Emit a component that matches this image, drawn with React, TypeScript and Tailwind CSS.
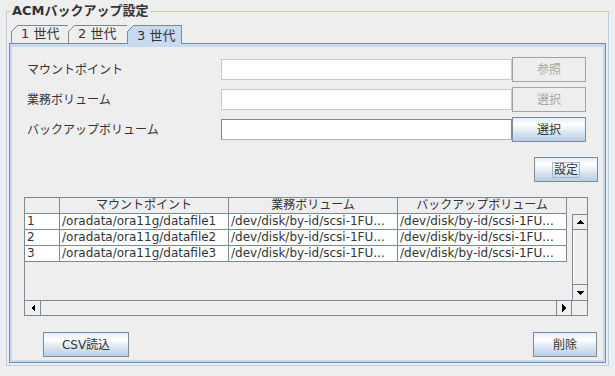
import React from 'react';

const rows = [
  ['1', '/oradata/ora11g/datafile1', '/dev/disk/by-id/scsi-1FU...', '/dev/disk/by-id/scsi-1FU...'],
  ['2', '/oradata/ora11g/datafile2', '/dev/disk/by-id/scsi-1FU...', '/dev/disk/by-id/scsi-1FU...'],
  ['3', '/oradata/ora11g/datafile3', '/dev/disk/by-id/scsi-1FU...', '/dev/disk/by-id/scsi-1FU...'],
];

const colWidths = ['w-[35px]', 'w-[169px]', 'w-[169px]', 'w-[169px]'];

const tabs = [
  { label: '1 世代', w: 57, selected: false },
  { label: '2 世代', w: 59, selected: false },
  { label: '3 世代', w: 55, selected: true },
];

function Tab({ label, w, selected, last }: { label: string; w: number; selected: boolean; last: boolean }) {
  const h = selected ? 19 : 18;
  const outline = `M0.5 ${h} V6.5 L6.5 0.5 H${w - 0.5}` + (last ? ` V${h}` : '');
  return (
    <div
      className={`relative flex items-center whitespace-pre pl-[10px] text-[13px] text-[#333333] ${
        selected ? 'z-10 h-[19px] items-start pt-[1px]' : 'h-[18px]'
      }`}
      style={{ width: w }}
    >
      <svg className="absolute left-0 top-0" width={w + 1} height={h} shapeRendering="crispEdges">
        {selected && <path d={`M0 ${h} V6.5 L6.5 0 H${w} V${h} Z`} fill="#c8daf0" />}
        <path d={outline} fill="none" stroke="#7a8a99" strokeWidth="1" />
      </svg>
      <span className="relative">{label}</span>
    </div>
  );
}

function Button({ label, width, disabled, focused }: { label: string; width: string; disabled?: boolean; focused?: boolean }) {
  if (disabled) {
    return (
      <div className={`flex h-[25px] ${width} shrink-0 items-center justify-center border border-[#a3a3a3] bg-[#eeeeee] text-[12px] text-[#a6a6a6]`}>
        {label}
      </div>
    );
  }
  return (
    <div
      className={`flex h-[25px] ${width} shrink-0 items-center justify-center border border-[#7a8a99] bg-[linear-gradient(to_bottom,#e4edf6_0%,#ffffff_28%,#dbe6f2_62%,#b8cfe5_100%)] text-[12px] text-[#333333]`}
    >
      <span className={focused ? 'border border-[#a3b8cc] px-[1px] leading-[14px]' : ''}>{label}</span>
    </div>
  );
}

function FormRow({ label, disabled, button }: { label: string; disabled: boolean; button: string }) {
  return (
    <div className="flex h-[25px] items-center">
      <div className="w-[194px] pl-[15px] text-[12px] text-[#333333]" style={{ boxSizing: 'content-box' }}>
        {label}
      </div>
      <div
        className={`h-[21px] w-[291px] border bg-white ${
          disabled ? 'border-[#bccbdb]' : 'border-[#7a8a99] border-b-[#a9b6c2]'
        }`}
      />
      <Button label={button} width="w-[74px]" disabled={disabled} />
    </div>
  );
}

function Arrow({ dir }: { dir: 'up' | 'down' | 'left' | 'right' }) {
  const d = {
    up: 'M0 4 L4 0 L8 4 Z',
    down: 'M0 0 L8 0 L4 4 Z',
    left: 'M4 0 L4 8 L0 4 Z',
    right: 'M0 0 L4 4 L0 8 Z',
  }[dir];
  const vertical = dir === 'up' || dir === 'down';
  return (
    <svg width={vertical ? 8 : 4} height={vertical ? 4 : 8} shapeRendering="crispEdges">
      <path d={d} fill="#000000" />
    </svg>
  );
}

export default function App() {
  return (
    <div className="h-[376px] w-[615px] overflow-hidden bg-[#eeeeee] pl-[6px] pt-[11px] font-['DejaVu_Sans','Noto_Sans_CJK_JP',sans-serif]">
      <div className="relative h-[355px] w-[603px] border border-[#b8cfe5] px-[2px] pt-[13px]">
        <span className="absolute left-[4px] top-[-10px] bg-[#eeeeee] px-[1px] text-[13px] font-bold leading-[18px] text-[#333333]">
          ACMバックアップ設定
        </span>

        <div className="ml-[2px] flex h-[18px]">
          {tabs.map((t, i) => (
            <Tab key={t.label} label={t.label} w={t.w} selected={t.selected} last={i === tabs.length - 1} />
          ))}
        </div>

        <div className="h-[320px] w-[597px] border border-[#7a8a99]">
          <div className="flex h-full flex-col border-x-2 border-b-2 border-t-[3px] border-[#c8daf0] bg-[#eeeeee]">
            <div className="mt-[10px] flex flex-col gap-[5px]">
              <FormRow label="マウントポイント" disabled button="参照" />
              <FormRow label="業務ボリューム" disabled button="選択" />
              <FormRow label="バックアップボリューム" disabled={false} button="選択" />
            </div>

            <div className="mr-[5px] mt-[15px] flex justify-end">
              <Button label="設定" width="w-[64px]" focused />
            </div>

            <div className="ml-[12px] mt-[15px] grid h-[119px] w-[564px] grid-cols-[547px_15px] grid-rows-[16px_86px_15px] border border-[#7a8a99] text-[12px] text-[#333333]">
              {/* column header */}
              <div className="flex">
                {['', 'マウントポイント', '業務ボリューム', 'バックアップボリューム'].map((h, i) => (
                  <div
                    key={i}
                    className={`${colWidths[i]} flex h-[16px] items-center justify-center border-b border-r border-[#7a8a99] leading-[15px]`}
                  >
                    {h}
                  </div>
                ))}
              </div>
              <div />

              {/* rows */}
              <div>
                {rows.map((r) => (
                  <div key={r[0]} className="flex">
                    {r.map((c, i) => (
                      <div
                        key={i}
                        className={`${colWidths[i]} h-[16px] overflow-hidden whitespace-nowrap border-b border-r border-[#7a8a99] bg-white pl-[2px] leading-[15px]`}
                      >
                        {c}
                      </div>
                    ))}
                  </div>
                ))}
              </div>

              {/* vertical scrollbar */}
              <div className="flex flex-col border-l border-[#7a8a99]">
                <div className="flex h-[16px] items-center justify-center border-b border-t border-[#7a8a99] bg-[#eeeeee]">
                  <Arrow dir="up" />
                </div>
                <div className="flex-1 border-l border-white" />
                <div className="flex h-[16px] items-center justify-center border-t border-[#7a8a99]">
                  <Arrow dir="down" />
                </div>
              </div>

              {/* horizontal scrollbar */}
              <div className="flex border-t border-[#7a8a99]">
                <div className="flex w-[16px] items-center justify-center border-r border-[#7a8a99]">
                  <Arrow dir="left" />
                </div>
                <div className="flex-1" />
                <div className="flex w-[16px] items-center justify-center border-l border-r border-[#7a8a99]">
                  <Arrow dir="right" />
                </div>
              </div>
              <div className="border-t border-[#7a8a99]" />
            </div>

            <div className="mt-[16px] flex items-center justify-between pl-[31px] pr-[6px]">
              <Button label="CSV読込" width="w-[86px]" />
              <Button label="削除" width="w-[64px]" />
            </div>
          </div>
        </div>
      </div>
    </div>
  );
}
